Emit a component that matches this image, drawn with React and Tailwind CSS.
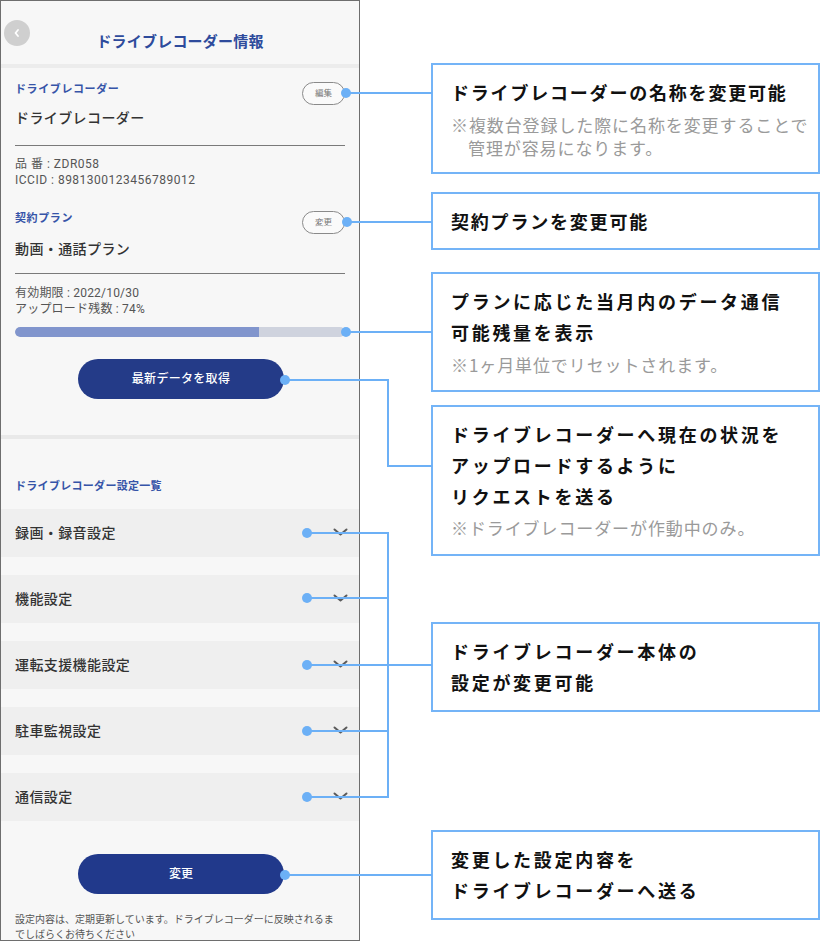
import React from 'react';

const jp = { fontFamily: '"Noto Sans CJK JP", "Noto Sans", sans-serif' };
const ui = { fontFamily: 'Roboto, "Noto Sans CJK JP", sans-serif' };

const settings = ['録画・録音設定', '機能設定', '運転支援機能設定', '駐車監視設定', '通信設定'];

const Pill = ({ label }) => (
  <div className="w-[43px] h-[23px] rounded-full border border-[#8a8a8a] bg-[#fafafa] flex items-center justify-center text-[8.5px] text-[#777]">
    {label}
  </div>
);

const Chevron = () => (
  <svg width="15" height="8" viewBox="0 0 15 8" className="-mt-[2px]">
    <path d="M1.5 1.5 L7.5 6.5 L13.5 1.5" fill="none" stroke="#5a5a5a" strokeWidth="2" strokeLinecap="round" strokeLinejoin="round" />
  </svg>
);

const Phone = () => (
  <div className="w-[360px] h-[941px] border border-[#6e6e6e] bg-[#f7f7f7] flex flex-col overflow-hidden shrink-0 *:shrink-0" style={ui}>
    {/* header */}
    <div className="h-[63px] grid grid-cols-[30px_1fr_30px]">
      <div className="mt-[19px] ml-[3px] w-[26px] h-[26px] rounded-full bg-[#cfcfcf] flex items-center justify-center">
        <svg width="10" height="10" viewBox="0 0 10 10">
          <path d="M6 2 L3.5 5 L6 8" fill="none" stroke="#fff" strokeWidth="1.8" strokeLinecap="round" strokeLinejoin="round" />
        </svg>
      </div>
      <div className="pt-[31px] text-center text-[15px] leading-[20px] font-bold text-[#2e4b9c] tracking-[0.2px]">ドライブレコーダー情報</div>
      <div />
    </div>
    <div className="h-[4px] bg-[#ececec]" />

    <div className="px-[14px] flex flex-col *:shrink-0">
      <div className="mt-[14px] flex justify-between items-start">
        <div className="mt-[2px] text-[11px] leading-[12px] font-bold text-[#3654a8] tracking-[0.6px]">ドライブレコーダー</div>
        <Pill label="編集" />
      </div>
      <div className="mt-[3px] text-[14px] leading-[20px] font-medium text-[#333] tracking-[0.4px]">ドライブレコーダー</div>
      <div className="mt-[17px] h-px bg-[#7a7a7a]" />
      <div className="mt-[10px] text-[12px] leading-[16px] text-[#555] tracking-[0.5px]">
        <div>品 番 : ZDR058</div>
        <div>ICCID : 8981300123456789012</div>
      </div>

      <div className="mt-[23px] flex justify-between items-start">
        <div className="mt-[2px] text-[11px] leading-[12px] font-bold text-[#3654a8] tracking-[0.6px]">契約プラン</div>
        <Pill label="変更" />
      </div>
      <div className="mt-[5px] text-[14px] leading-[20px] font-medium text-[#333] tracking-[0.4px]">動画・通話プラン</div>
      <div className="mt-[14px] h-px bg-[#7a7a7a]" />
      <div className="mt-[11px] text-[12px] leading-[16px] text-[#555] tracking-[0.2px]">
        <div>有効期限 : 2022/10/30</div>
        <div>アップロード残数 : 74%</div>
      </div>
      <div className="mt-[10px] h-[10px] rounded-full bg-[#cfd3de] overflow-hidden">
        <div className="h-full bg-[#8195cd] rounded-l-full" style={{ width: '74%' }} />
      </div>
      <button className="mt-[22px] self-center ml-[2px] w-[206px] h-[40px] rounded-full bg-[#243b88] text-white text-[12px] font-medium tracking-[0.3px]">
        最新データを取得
      </button>
    </div>

    <div className="mt-[36px] h-[4px] bg-[#e9e9e9]" />

    <div className="mt-[42px] px-[14px] text-[11px] leading-[12px] font-bold text-[#3654a8] tracking-[0.3px]">ドライブレコーダー設定一覧</div>

    <div className="mt-[16px] flex flex-col gap-[18px]">
      {settings.map((s) => (
        <div key={s} className="h-[48px] bg-[#efefef] flex items-center justify-between pl-[14px] pr-[11px]">
          <span className="text-[14px] font-medium text-[#333] tracking-[0.4px]">{s}</span>
          <Chevron />
        </div>
      ))}
    </div>

    <button className="mt-[33px] self-center ml-[2px] w-[206px] h-[40px] rounded-full bg-[#21398b] text-white text-[12px] font-medium">
      変更
    </button>

    <div className="mt-[18px] px-[14px] text-[10px] leading-[15px] text-[#555]">
      設定内容は、定期更新しています。ドライブレコーダーに反映されるま<br />でしばらくお待ちください
    </div>
  </div>
);

const Box = ({ h, mt, children }) => (
  <div className="border-2 border-[#74b4f7] bg-white pl-[18px] pt-[12px]" style={{ height: h, marginTop: mt }}>
    {children}
  </div>
);

const Head = ({ children, wide }) => (
  <div className={`text-[18px] leading-[31px] font-bold text-[#111] ${wide ? 'tracking-[2.7px]' : 'tracking-[1.8px]'}`}>{children}</div>
);

const Note = ({ children, className = '' }) => (
  <div className={`text-[17px] leading-[23px] text-[#9a9a9a] tracking-[0.9px] ${className}`}>{children}</div>
);

const Callouts = () => (
  <div className="ml-[71px] w-[389px] flex flex-col" style={jp}>
    <Box h={111} mt={63}>
      <Head>ドライブレコーダーの名称を変更可能</Head>
      <Note className="mt-[5px]">※複数台登録した際に名称を変更することで</Note>
      <Note className="pl-[17px]">管理が容易になります。</Note>
    </Box>
    <Box h={58} mt={18}>
      <Head>契約プランを変更可能</Head>
    </Box>
    <Box h={120} mt={22}>
      <Head wide>プランに応じた当月内のデータ通信</Head>
      <Head wide>可能残量を表示</Head>
      <Note className="mt-[5px]">※1ヶ月単位でリセットされます。</Note>
    </Box>
    <Box h={151} mt={13}>
      <Head wide>ドライブレコーダーへ現在の状況を</Head>
      <Head wide>アップロードするように</Head>
      <Head wide>リクエストを送る</Head>
      <Note className="mt-[4px]">※ドライブレコーダーが作動中のみ。</Note>
    </Box>
    <Box h={90} mt={66}>
      <Head wide>ドライブレコーダー本体の</Head>
      <Head wide>設定が変更可能</Head>
    </Box>
    <Box h={90} mt={118}>
      <Head wide>変更した設定内容を</Head>
      <Head wide>ドライブレコーダーへ送る</Head>
    </Box>
  </div>
);

const dots = [
  [346, 93], [347, 222], [346, 332], [285, 380],
  [307, 533], [307, 598], [307, 665], [307, 731], [307, 797], [285, 875],
];

const Connectors = () => (
  <svg className="absolute inset-0 pointer-events-none" width="820" height="942" viewBox="0 0 820 942">
    <g fill="none" stroke="#6cb0f6" strokeWidth="2">
      <path d="M346 93 H432" />
      <path d="M347 222 H432" />
      <path d="M346 332 H432" />
      <path d="M285 380 H388 V466 H432" />
      <path d="M307 533 H388 V797 H307" />
      <path d="M307 598 H388" />
      <path d="M307 665 H432" />
      <path d="M307 731 H388" />
      <path d="M285 875 H432" />
    </g>
    <g fill="#6cb0f6">
      {dots.map(([x, y]) => (
        <circle key={`${x}-${y}`} cx={x} cy={y} r="5" />
      ))}
    </g>
  </svg>
);

export default function App() {
  return (
    <div className="relative w-[820px] h-[942px] bg-white flex items-start overflow-hidden">
      <Phone />
      <Callouts />
      <Connectors />
    </div>
  );
}
